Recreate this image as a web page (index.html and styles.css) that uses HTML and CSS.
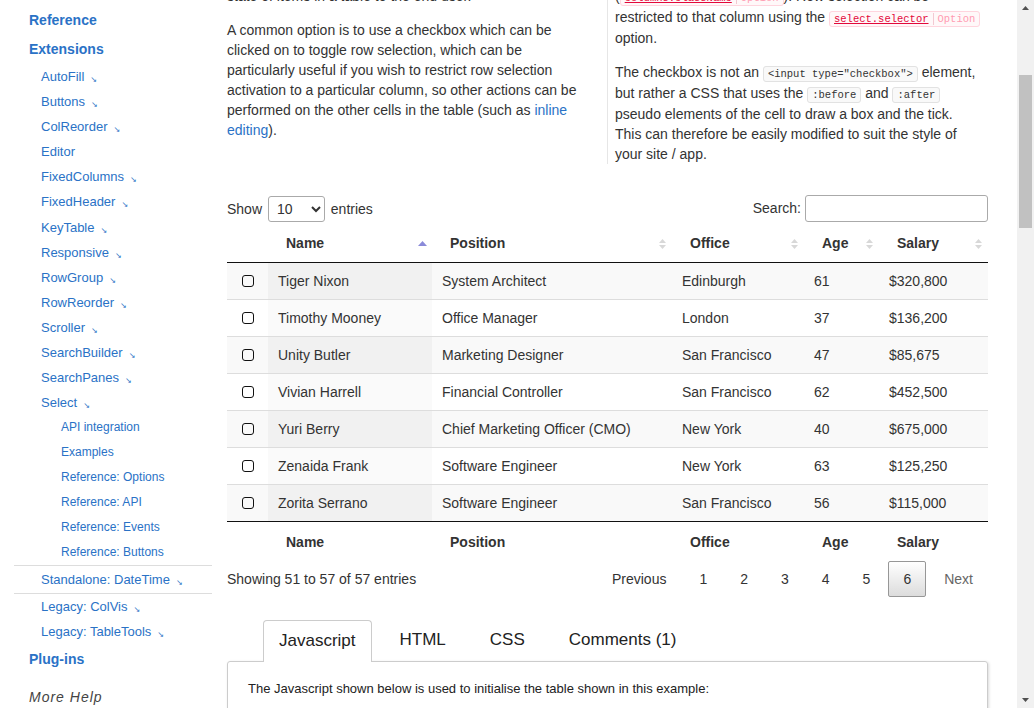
FILE: index.html
```html
<!DOCTYPE html>
<html lang="en">
<head>
<meta charset="utf-8">
<title>Select - Checkbox selection</title>
<link rel="stylesheet" href="styles.css">
</head>
<body>
<div class="page">
  <nav class="sidebar">
    <ul class="nav">
      <li class="top"><a href="#">Reference</a></li>
      <li class="top ext-group"><a href="#">Extensions</a>
        <ul class="sub">
          <li><a href="#">AutoFill</a><span class="ext">↘</span></li>
          <li><a href="#">Buttons</a><span class="ext">↘</span></li>
          <li><a href="#">ColReorder</a><span class="ext">↘</span></li>
          <li><a href="#">Editor</a></li>
          <li><a href="#">FixedColumns</a><span class="ext">↘</span></li>
          <li><a href="#">FixedHeader</a><span class="ext">↘</span></li>
          <li><a href="#">KeyTable</a><span class="ext">↘</span></li>
          <li><a href="#">Responsive</a><span class="ext">↘</span></li>
          <li><a href="#">RowGroup</a><span class="ext">↘</span></li>
          <li><a href="#">RowReorder</a><span class="ext">↘</span></li>
          <li><a href="#">Scroller</a><span class="ext">↘</span></li>
          <li><a href="#">SearchBuilder</a><span class="ext">↘</span></li>
          <li><a href="#">SearchPanes</a><span class="ext">↘</span></li>
          <li><a href="#">Select</a><span class="ext">↘</span>
            <ul class="subsub">
              <li><a href="#">API integration</a></li>
              <li><a href="#">Examples</a></li>
              <li><a href="#">Reference: Options</a></li>
              <li><a href="#">Reference: API</a></li>
              <li><a href="#">Reference: Events</a></li>
              <li><a href="#">Reference: Buttons</a></li>
            </ul>
          </li>
          <li class="standalone"><a href="#">Standalone: DateTime</a><span class="ext">↘</span></li>
          <li><a href="#">Legacy: ColVis</a><span class="ext">↘</span></li>
          <li><a href="#">Legacy: TableTools</a><span class="ext">↘</span></li>
        </ul>
      </li>
      <li class="top plugins"><a href="#">Plug-ins</a></li>
      <li class="more">More Help</li>
    </ul>
  </nav>

  <main class="main" id="main">
    <div class="content">
      <header class="intro">
        <h1>Select example <span>Checkbox selection</span></h1>
        <p>Select provides a number of options for how row selection is shown to the end user, with styling integrated for each of the supported frameworks.</p>
      </header>

      <div class="cols">
        <div class="col col-left">
          <p>A checkbox is a common way of showing the selection<br>state of items in a table to the end user.</p>
          <p id="anchor">A common option is to use a checkbox which can be clicked on to toggle row selection, which can be particularly useful if you wish to restrict row selection activation to a particular column, so other actions can be performed on the other cells in the table (such as <a href="#">inline editing</a>).</p>
        </div>
        <div class="col col-right">
          <p>Select can show a checkbox in a column using the class<br>(<span class="ref"><a href="#">columns.className</a><span class="type">Option</span></span>). Row selection can be <span class="nowrap">restricted to that column using the <span class="ref"><a href="#">select.selector</a><span class="type">Option</span></span></span> option.</p>
          <p>The checkbox is not an <code class="tag">&lt;input type="checkbox"&gt;</code> element, but rather a CSS that uses the <code class="tag">:before</code> and <code class="tag">:after</code> pseudo elements of the cell to draw a box and the tick. This can therefore be easily modified to suit the style of your site / app.</p>
        </div>
      </div>

      <div class="dt-wrapper">
        <div class="dt-top">
          <label class="length">Show
            <select><option>10</option><option>25</option><option>50</option><option>100</option></select>
            entries</label>
          <label class="filter">Search:<input type="search"></label>
        </div>

        <table class="display">
          <colgroup>
            <col class="w-check"><col class="w-name"><col class="w-pos"><col class="w-office"><col class="w-age"><col class="w-salary">
          </colgroup>
          <thead>
            <tr>
              <th></th>
              <th>Name<svg class="sort" viewBox="0 0 9 12" width="9" height="12"><polygon points="0,8 4.5,3 9,8" fill="#8a8ad9"/></svg></th>
              <th>Position<svg class="sort" viewBox="0 0 9 12" width="9" height="12"><polygon points="1,5 4.5,1 8,5" fill="#d8d8d8"/><polygon points="1,7 4.5,11 8,7" fill="#d8d8d8"/></svg></th>
              <th>Office<svg class="sort" viewBox="0 0 9 12" width="9" height="12"><polygon points="1,5 4.5,1 8,5" fill="#d8d8d8"/><polygon points="1,7 4.5,11 8,7" fill="#d8d8d8"/></svg></th>
              <th>Age<svg class="sort" viewBox="0 0 9 12" width="9" height="12"><polygon points="1,5 4.5,1 8,5" fill="#d8d8d8"/><polygon points="1,7 4.5,11 8,7" fill="#d8d8d8"/></svg></th>
              <th>Salary<svg class="sort" viewBox="0 0 9 12" width="9" height="12"><polygon points="1,5 4.5,1 8,5" fill="#d8d8d8"/><polygon points="1,7 4.5,11 8,7" fill="#d8d8d8"/></svg></th>
            </tr>
          </thead>
          <tbody>
            <tr class="odd"><td class="check"><span class="box"></span></td><td class="sorted">Tiger Nixon</td><td>System Architect</td><td>Edinburgh</td><td>61</td><td>$320,800</td></tr>
            <tr class="even"><td class="check"><span class="box"></span></td><td class="sorted">Timothy Mooney</td><td>Office Manager</td><td>London</td><td>37</td><td>$136,200</td></tr>
            <tr class="odd"><td class="check"><span class="box"></span></td><td class="sorted">Unity Butler</td><td>Marketing Designer</td><td>San Francisco</td><td>47</td><td>$85,675</td></tr>
            <tr class="even"><td class="check"><span class="box"></span></td><td class="sorted">Vivian Harrell</td><td>Financial Controller</td><td>San Francisco</td><td>62</td><td>$452,500</td></tr>
            <tr class="odd"><td class="check"><span class="box"></span></td><td class="sorted">Yuri Berry</td><td>Chief Marketing Officer (CMO)</td><td>New York</td><td>40</td><td>$675,000</td></tr>
            <tr class="even"><td class="check"><span class="box"></span></td><td class="sorted">Zenaida Frank</td><td>Software Engineer</td><td>New York</td><td>63</td><td>$125,250</td></tr>
            <tr class="odd"><td class="check"><span class="box"></span></td><td class="sorted">Zorita Serrano</td><td>Software Engineer</td><td>San Francisco</td><td>56</td><td>$115,000</td></tr>
          </tbody>
          <tfoot>
            <tr><th></th><th>Name</th><th>Position</th><th>Office</th><th>Age</th><th>Salary</th></tr>
          </tfoot>
        </table>

        <div class="dt-bottom">
          <div class="info">Showing 51 to 57 of 57 entries</div>
          <div class="paging">
            <a class="btn" href="#">Previous</a><a class="btn" href="#">1</a><a class="btn" href="#">2</a><a class="btn" href="#">3</a><a class="btn" href="#">4</a><a class="btn" href="#">5</a><a class="btn current" href="#">6</a><a class="btn disabled" href="#">Next</a>
          </div>
        </div>
      </div>

      <ul class="tabs">
        <li class="active">Javascript</li>
        <li>HTML</li>
        <li>CSS</li>
        <li>Comments (1)</li>
      </ul>
      <div class="tab-panel">
        <p>The Javascript shown below is used to initialise the table shown in this example:</p>
        <pre class="code">$(document).ready(function() {
    $('#example').DataTable( {
        columnDefs: [ {
            orderable: false,
            className: 'select-checkbox',
            targets:   0
        } ],
        select: {
            style:    'os',
            selector: 'td:first-child'
        },
        order: [[ 1, 'asc' ]]
    } );
} );</pre>
      </div>
      <footer class="foot">DataTables designed and created by SpryMedia Ltd.</footer>
    </div>
  </main>

  <div class="scrollbar" aria-hidden="true">
    <div class="sb-btn"><svg viewBox="0 0 17 17" width="17" height="17"><polygon points="5,10 8.5,6 12,10" fill="#505050"/></svg></div>
    <div class="sb-track"><div class="sb-thumb"></div></div>
    <div class="sb-btn"><svg viewBox="0 0 17 17" width="17" height="17"><polygon points="5,7 8.5,11 12,7" fill="#505050"/></svg></div>
  </div>
</div>
<script src="script.js"></script>
</body>
</html>
```

FILE: styles.css
```css
html, body {
  margin: 0;
  padding: 0;
}

body {
  font-family: "Liberation Sans", Arial, sans-serif;
  font-size: 14px;
  line-height: 20px;
  color: #333;
  background: #fff;
  overflow: hidden;
}

a {
  color: #2a72c6;
  text-decoration: none;
}

.page {
  display: flex;
  height: 708px;
}

/* ---------- sidebar ---------- */
.sidebar {
  width: 212px;
  flex: none;
  overflow: hidden;
}

.sidebar ul {
  list-style: none;
  margin: 0;
  padding: 0;
}

.sidebar .nav {
  padding-top: 10px;
}

.sidebar .top > a {
  display: block;
  padding-left: 29px;
  font-weight: bold;
  font-size: 14px;
  line-height: 20px;
}

.sidebar .top {
  margin-bottom: 9px;
}

.sidebar .top.ext-group {
  margin-bottom: 5px;
}

.sidebar .sub {
  margin-top: 5px;
}

.sidebar .sub > li {
  font-size: 13px;
  line-height: 25.1px;
  padding-left: 41px;
}

.ext {
  font-family: "DejaVu Sans", sans-serif;
  font-size: 8px;
  line-height: 0;
  color: #2a72c6;
  margin-left: 6px;
  position: relative;
  top: 1px;
}

.sidebar .subsub {
  margin-left: 20px;
}

.sidebar .subsub > li {
  font-size: 12px;
  line-height: 24.9px;
}

.sidebar .sub > li.standalone {
  margin-left: 14px;
  padding-left: 27px;
  line-height: 27px;
  border-top: 1px solid #dddddd;
  border-bottom: 1px solid #dddddd;
}

.sidebar .top.plugins {
  margin: 0;
}

.sidebar .more {
  margin-top: 18px;
  padding-left: 29px;
  font-style: italic;
  letter-spacing: 1px;
  font-size: 14px;
  line-height: 20px;
  color: #444;
}

/* ---------- main ---------- */
.main {
  flex: 1;
  overflow: hidden;
}

.content {
  padding: 0 29px 0 15px;
}

.intro {
  padding-top: 20px;
}

.intro h1 {
  margin: 0 0 20px;
  font-size: 28px;
  line-height: 34px;
  font-weight: normal;
  color: #111;
}

.intro h1 span {
  display: block;
  font-size: 20px;
  color: #666;
}

.intro p {
  margin: 0 0 14px;
}

.cols {
  display: grid;
  grid-template-columns: 365px 1fr;
  column-gap: 15px;
  margin-top: 40px;
}

.col p {
  margin: 0 0 14px;
}

.col p:last-child {
  margin-bottom: 0;
}

.col-right {
  border-left: 1px solid #e6e6e6;
  padding-left: 7px;
  margin-right: 6px;
  overflow: hidden;
}

.nowrap {
  white-space: nowrap;
}

code.tag {
  font-family: "Liberation Mono", "DejaVu Sans Mono", monospace;
  font-size: 10.5px;
  line-height: 17px;
  color: #333;
  background: #f9f9f9;
  border: 1px solid #e2e2e2;
  border-radius: 3px;
  padding: 1px 4px;
}

.ref {
  font-family: "Liberation Mono", "DejaVu Sans Mono", monospace;
  font-size: 10.5px;
  line-height: 17px;
  border: 1px solid #ffd5de;
  background: #fff8f9;
  border-radius: 3px;
  padding: 1px 0;
}

.ref a {
  color: #e3093b;
  text-decoration: underline;
  padding: 0 4px;
}

.ref .type {
  color: #ff9cb2;
  border-left: 1px solid #f3c9d2;
  padding: 0 4px;
}

/* ---------- datatable ---------- */
.dt-wrapper {
  margin-top: 31px;
}

.dt-top {
  display: flex;
  justify-content: space-between;
  align-items: center;
  height: 27px;
  margin-bottom: 3px;
}

.length select {
  width: 57px;
  height: 26px;
  margin: 0 2px;
  padding: 0 4px;
  border: 1px solid #aaa;
  border-radius: 3px;
  background: #fff;
  font: 14px "Liberation Sans", Arial, sans-serif;
  color: #333;
}

.filter input {
  width: 183px;
  height: 27px;
  box-sizing: border-box;
  margin-left: 4px;
  border: 1px solid #aaa;
  border-radius: 3px;
  padding: 4px;
  background: #fff;
}

table.display {
  width: 100%;
  border-collapse: separate;
  border-spacing: 0;
  table-layout: fixed;
}

.w-check { width: 41px; }
.w-name { width: 164px; }
.w-pos { width: 240px; }
.w-office { width: 132px; }
.w-age { width: 75px; }
.w-salary { width: 109px; }

table.display thead th {
  position: relative;
  padding: 10px 18px;
  line-height: 17px;
  text-align: left;
  font-weight: bold;
  border-bottom: 1px solid #111;
  white-space: nowrap;
}

.sort {
  position: absolute;
  right: 5px;
  top: 13px;
}

table.display tbody td {
  padding: 8px 10px;
  line-height: 20px;
  border-top: 1px solid #ddd;
  white-space: nowrap;
}

table.display tbody tr:first-child td {
  border-top: none;
}

tr.odd td { background: #f9f9f9; }
tr.even td { background: #fff; }
tr.odd td.sorted { background: #f1f1f1; }
tr.even td.sorted { background: #fafafa; }

td.check {
  text-align: center;
}

.box {
  display: inline-block;
  width: 10px;
  height: 10px;
  border: 1.5px solid #111;
  border-radius: 3px;
  vertical-align: -1px;
}

table.display tfoot th {
  padding: 10px 18px 6px;
  line-height: 20px;
  text-align: left;
  font-weight: bold;
  border-top: 1px solid #111;
}

.dt-bottom {
  display: flex;
  justify-content: space-between;
  align-items: flex-start;
}

.info {
  padding-top: 10.5px;
}

.paging {
  padding-top: 3px;
  display: flex;
}

.btn {
  display: block;
  box-sizing: border-box;
  padding: 7px 14px;
  margin-left: 3px;
  min-width: 1.5em;
  text-align: center;
  border: 1px solid transparent;
  border-radius: 2px;
  color: #333;
  line-height: 20px;
}

.btn:first-child {
  margin-left: 0;
}

.btn.current {
  border-color: #979797;
  background: linear-gradient(to bottom, #ffffff 0%, #dcdcdc 100%);
}

.btn.disabled {
  color: #666;
}

/* ---------- tabs ---------- */
.tabs {
  list-style: none;
  display: flex;
  gap: 12px;
  margin: 23px 0 0 36px;
  padding: 0;
}

.tabs li {
  padding: 0 16px;
  font-size: 17px;
  line-height: 40px;
  color: #222;
}

.tabs li.active {
  padding: 0 15px 1px;
  background: #fff;
  border: 1px solid #ccc;
  border-bottom: none;
  border-radius: 4px 4px 0 0;
  position: relative;
  margin-bottom: -1px;
  z-index: 1;
}

.tab-panel {
  border: 1px solid #ccc;
  border-radius: 3px;
  box-shadow: 1px 1px 3px rgba(0, 0, 0, 0.15);
  padding: 18px 20px 20px;
  min-height: 600px;
  font-size: 13px;
  line-height: 18px;
  color: #222;
}

.tab-panel p {
  margin: 0 0 24px;
}

.code {
  font: 12px/18px "Liberation Mono", monospace;
  background: #f8f8f8;
  border: 1px solid #e5e5e5;
  padding: 10px;
  margin: 0;
}

.foot {
  padding: 30px 0 40px;
  font-size: 12px;
  color: #888;
}

/* ---------- scrollbar ---------- */
.scrollbar {
  width: 17px;
  flex: none;
  display: flex;
  flex-direction: column;
  background: #f1f1f1;
}

.sb-btn {
  height: 17px;
  flex: none;
}

.sb-btn svg {
  display: block;
}

.sb-track {
  flex: 1;
  padding: 58px 2px 0;
}

.sb-thumb {
  height: 153px;
  background: #c1c1c1;
}
```

FILE: script.js
```js
(function () {
  var main = document.getElementById('main');
  var anchor = document.getElementById('anchor');
  var offset = anchor.getBoundingClientRect().top - main.getBoundingClientRect().top;
  main.scrollTop = main.scrollTop + offset - 20;
})();
```
